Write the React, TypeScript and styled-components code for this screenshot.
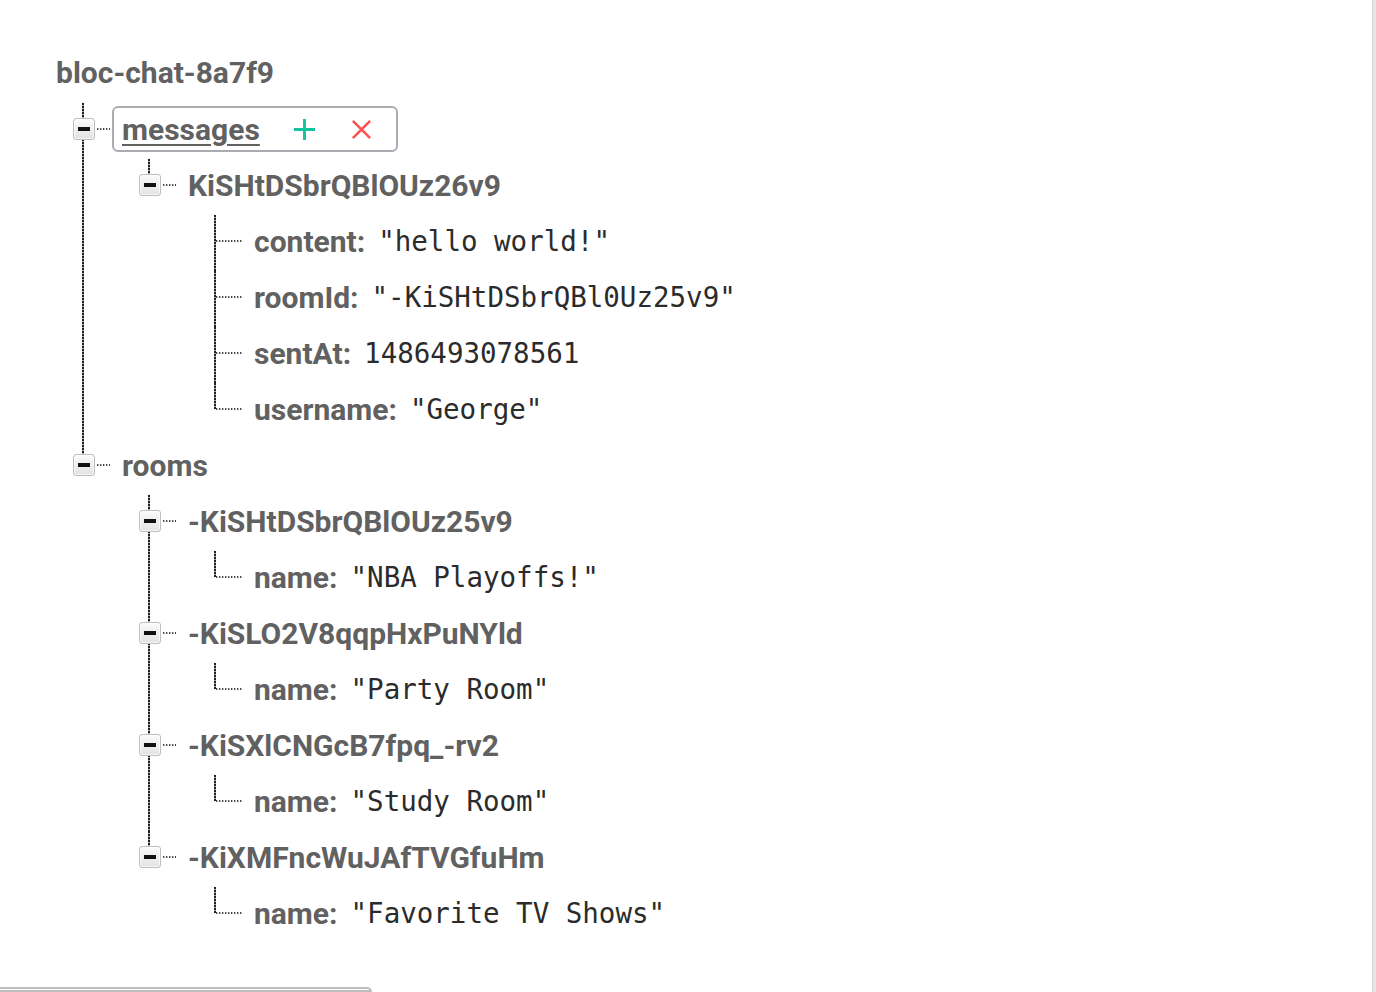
import { ReactElement } from 'react';
import styled, { createGlobalStyle, css } from 'styled-components';

const GlobalStyle = createGlobalStyle`
  html, body {
    margin: 0;
    padding: 0;
    background: #fff;
    overflow: hidden;
  }
  body {
    font-family: Roboto, 'Noto Sans', sans-serif;
  }
`;

const Page = styled.div`
  display: flex;
  width: 1376px;
  height: 992px;
  overflow: hidden;
`;

const Main = styled.main`
  flex: 1;
  display: flex;
  flex-direction: column;
  padding-top: 45px;
`;

const ScrollEdge = styled.div`
  width: 3px;
  background: #e6e6e6;
  border-left: 1px solid #d2d2d2;
`;

const Title = styled.h1`
  margin: 0 0 0 56px;
  height: 56px;
  line-height: 56px;
  font-size: 30px;
  font-weight: 700;
  color: #616161;
`;

const Group = styled.ul<{ nested?: boolean }>`
  list-style: none;
  margin: 0;
  padding: 0 0 0 ${({ nested }) => (nested ? 66 : 73)}px;
`;

const dotsVertical = css`
  background-image: repeating-linear-gradient(to bottom, #1e1e1e 0 2px, #a8a8a8 2px 3px);
`;

const Item = styled.li<{ last?: boolean }>`
  position: relative;

  &::before {
    content: '';
    position: absolute;
    left: 9px;
    top: 2px;
    width: 2px;
    ${dotsVertical};
    ${({ last }) => (last ? 'height: 26px;' : 'bottom: -2px;')}
  }
`;

const Row = styled.div`
  position: relative;
  height: 56px;
  display: flex;
  align-items: center;
`;

const Toggle = styled.span`
  position: relative;
  z-index: 1;
  box-sizing: border-box;
  width: 22px;
  height: 22px;
  border: 1px solid #bfbfbf;
  border-radius: 3px;
  background: linear-gradient(#fafafa, #e2e2e2);
  box-shadow: inset 0 0 0 1px rgba(255, 255, 255, 0.7);

  &::after {
    content: '';
    position: absolute;
    left: 4px;
    top: 8px;
    width: 12px;
    height: 4px;
    background: #111;
  }
`;

const Connector = styled.span<{ leaf?: boolean }>`
  height: 2px;
  margin-left: ${({ leaf }) => (leaf ? 11 : 2)}px;
  width: ${({ leaf }) => (leaf ? 26 : 13)}px;
  background-image: repeating-linear-gradient(to right, #444 0 1px, #bbb 1px 2px, transparent 2px 3px);
`;

const LabelBox = styled.div<{ selected?: boolean }>`
  display: flex;
  align-items: center;
  margin-left: 2px;
  padding: 0 8px;
  height: 42px;
  border: 2px solid ${({ selected }) => (selected ? '#a9adb1' : 'transparent')};
  border-radius: 6px;
  white-space: nowrap;
`;

const Key = styled.span<{ link?: boolean }>`
  font-size: 30px;
  font-weight: 700;
  color: #616161;
  ${({ link }) =>
    link &&
    css`
      text-decoration: underline;
      text-underline-offset: 4px;
      text-decoration-thickness: 2px;
    `}
`;

const Value = styled.span`
  margin-left: 13px;
  font-family: 'DejaVu Sans Mono', 'Liberation Mono', monospace;
  font-size: 27.5px;
  color: #2b2b2b;
`;

const Actions = styled.div`
  display: flex;
  align-items: center;
  gap: 34px;
  margin: 0 15px 0 33px;
`;

const ActionIcon = styled.svg`
  display: block;
  width: 23px;
  height: 23px;
`;

const FooterBox = styled.div`
  margin-top: 46px;
  width: 372px;
  height: 30px;
  box-sizing: border-box;
  border: 2px solid #bdbdbd;
  border-left: none;
  border-radius: 0 6px 0 0;
`;

interface Node {
  key: string;
  value?: string;
  selected?: boolean;
  children?: Node[];
}

const tree: Node[] = [
  {
    key: 'messages',
    selected: true,
    children: [
      {
        key: 'KiSHtDSbrQBlOUz26v9',
        children: [
          { key: 'content', value: '"hello world!"' },
          { key: 'roomId', value: '"-KiSHtDSbrQBl0Uz25v9"' },
          { key: 'sentAt', value: '1486493078561' },
          { key: 'username', value: '"George"' },
        ],
      },
    ],
  },
  {
    key: 'rooms',
    children: [
      { key: '-KiSHtDSbrQBlOUz25v9', children: [{ key: 'name', value: '"NBA Playoffs!"' }] },
      { key: '-KiSLO2V8qqpHxPuNYld', children: [{ key: 'name', value: '"Party Room"' }] },
      { key: '-KiSXlCNGcB7fpq_-rv2', children: [{ key: 'name', value: '"Study Room"' }] },
      { key: '-KiXMFncWuJAfTVGfuHm', children: [{ key: 'name', value: '"Favorite TV Shows"' }] },
    ],
  },
];

function PlusIcon(): ReactElement {
  return (
    <ActionIcon viewBox="0 0 24 24">
      <path d="M12 1v22M1 12h22" stroke="#12c39d" strokeWidth="3" fill="none" />
    </ActionIcon>
  );
}

function CloseIcon(): ReactElement {
  return (
    <ActionIcon viewBox="0 0 24 24">
      <path d="M3 3l18 18M21 3L3 21" stroke="#ff4f4f" strokeWidth="2.6" fill="none" />
    </ActionIcon>
  );
}

function TreeNode({ node, last }: { node: Node; last: boolean }): ReactElement {
  const hasChildren = !!node.children;

  return (
    <Item last={last}>
      <Row>
        {hasChildren ? <Toggle /> : null}
        <Connector leaf={!hasChildren} />
        <LabelBox selected={node.selected}>
          <Key link={node.selected}>
            {node.key}
            {node.value !== undefined ? ':' : ''}
          </Key>
          {node.value !== undefined && <Value>{node.value}</Value>}
          {node.selected && (
            <Actions>
              <PlusIcon />
              <CloseIcon />
            </Actions>
          )}
        </LabelBox>
      </Row>
      {hasChildren && (
        <Group nested>
          {node.children!.map((child, i) => (
            <TreeNode key={child.key} node={child} last={i === node.children!.length - 1} />
          ))}
        </Group>
      )}
    </Item>
  );
}

export default function App(): ReactElement {
  return (
    <>
      <GlobalStyle />
      <Page>
        <Main>
          <Title>bloc-chat-8a7f9</Title>
          <Group>
            {tree.map((node, i) => (
              <TreeNode key={node.key} node={node} last={i === tree.length - 1} />
            ))}
          </Group>
          <FooterBox />
        </Main>
        <ScrollEdge />
      </Page>
    </>
  );
}
